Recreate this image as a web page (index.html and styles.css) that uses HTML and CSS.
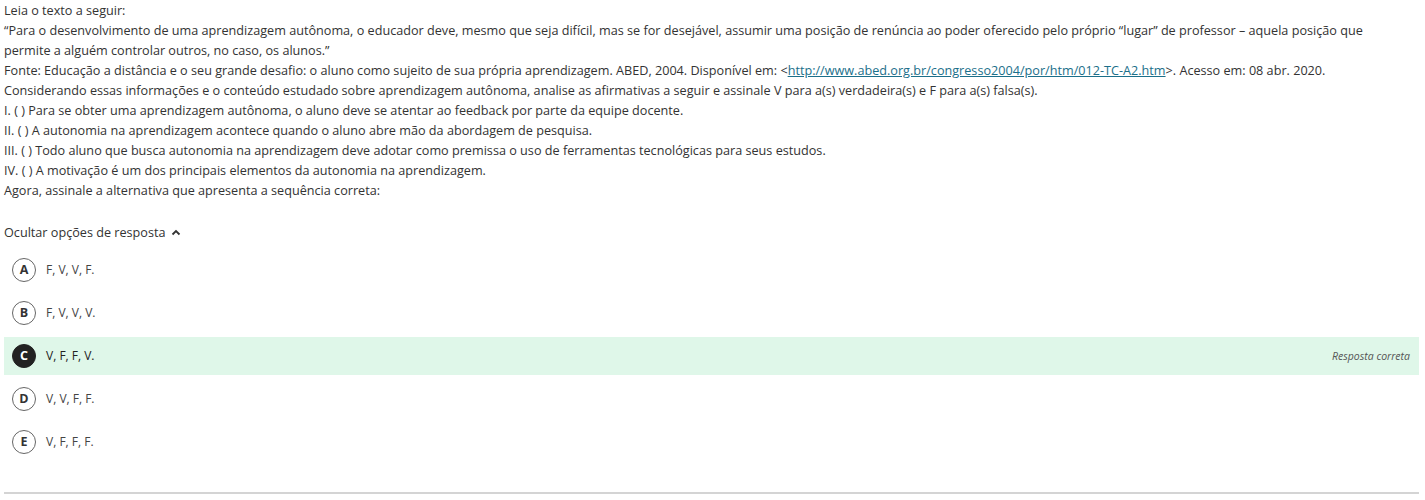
FILE: index.html
```html
<!DOCTYPE html>
<html lang="pt-BR">
<head>
<meta charset="utf-8">
<link rel="stylesheet" href="styles.css">
</head>
<body>
<div class="page">
  <div class="question">
    <p>Leia o texto a seguir:</p>
    <p>“Para o desenvolvimento de uma aprendizagem autônoma, o educador deve, mesmo que seja difícil, mas se for desejável, assumir uma posição de renúncia ao poder oferecido pelo próprio “lugar” de professor – aquela posição que permite a alguém controlar outros, no caso, os alunos.”</p>
    <p>Fonte: Educação a distância e o seu grande desafio: o aluno como sujeito de sua própria aprendizagem. ABED, 2004. Disponível em: &lt;<a href="#" class="link">http://www.abed.org.br/congresso2004/por/htm/012-TC-A2.htm</a>&gt;. Acesso em: 08 abr. 2020.</p>
    <p>Considerando essas informações e o conteúdo estudado sobre aprendizagem autônoma, analise as afirmativas a seguir e assinale V para a(s) verdadeira(s) e F para a(s) falsa(s).</p>
    <p>I. ( ) Para se obter uma aprendizagem autônoma, o aluno deve se atentar ao feedback por parte da equipe docente.</p>
    <p>II. ( ) A autonomia na aprendizagem acontece quando o aluno abre mão da abordagem de pesquisa.</p>
    <p>III. ( ) Todo aluno que busca autonomia na aprendizagem deve adotar como premissa o uso de ferramentas tecnológicas para seus estudos.</p>
    <p>IV. ( ) A motivação é um dos principais elementos da autonomia na aprendizagem.</p>
    <p>Agora, assinale a alternativa que apresenta a sequência correta:</p>
  </div>
  <div class="toggle">Ocultar opções de resposta <svg class="chev" width="10" height="8" viewBox="0 0 10 8"><path d="M1.5 5.5 L5 2 L8.5 5.5" fill="none" stroke="#333" stroke-width="1.8"/></svg></div>
  <div class="options">
    <div class="opt"><span class="badge">A</span><span class="txt">F, V, V, F.</span></div>
    <div class="opt"><span class="badge">B</span><span class="txt">F, V, V, V.</span></div>
    <div class="opt correct"><span class="badge">C</span><span class="txt">V, F, F, V.</span><span class="note">Resposta correta</span></div>
    <div class="opt"><span class="badge">D</span><span class="txt">V, V, F, F.</span></div>
    <div class="opt"><span class="badge">E</span><span class="txt">V, F, F, F.</span></div>
  </div>
  <div class="rule"></div>
</div>
</body>
</html>
```
FILE: styles.css
```css
html, body {
  margin: 0;
  padding: 0;
  background: #fff;
}
body {
  font-family: "Open Sans", "Liberation Sans", sans-serif;
  font-size: 12.65px;
  color: #333;
  line-height: 20px;
}
.page {
  padding: 0 6px 0 4px;
}
.question {
  padding-right: 14px;
}
.question p {
  margin: 0;
}
.link {
  color: #1b6f8a;
  text-decoration: underline;
}
.toggle {
  margin-top: 22px;
  height: 20px;
  display: flex;
  align-items: center;
  gap: 5px;
}
.chev {
  margin-top: 1px;
}
.options {
  margin-top: 9px;
  display: flex;
  flex-direction: column;
  gap: 5px;
}
.opt {
  height: 38px;
  display: flex;
  align-items: center;
  padding: 0 9px 0 8px;
}
.badge {
  width: 22px;
  height: 22px;
  border: 1.5px solid #666;
  border-radius: 50%;
  display: flex;
  align-items: center;
  justify-content: center;
  font-weight: 700;
  font-size: 12.5px;
  color: #333;
  flex: none;
}
.txt {
  margin-left: 10px;
  font-size: 12px;
  color: #444;
}
.correct {
  background: #dff7e9;
}
.correct .badge {
  background: #222;
  border-color: #222;
  color: #fff;
}
.correct .txt {
  color: #222;
}
.note {
  margin-left: auto;
  font-style: italic;
  font-size: 10.5px;
  color: #555;
}
.rule {
  margin-top: 31px;
  border-top: 2px solid #d4d4d4;
}
```
